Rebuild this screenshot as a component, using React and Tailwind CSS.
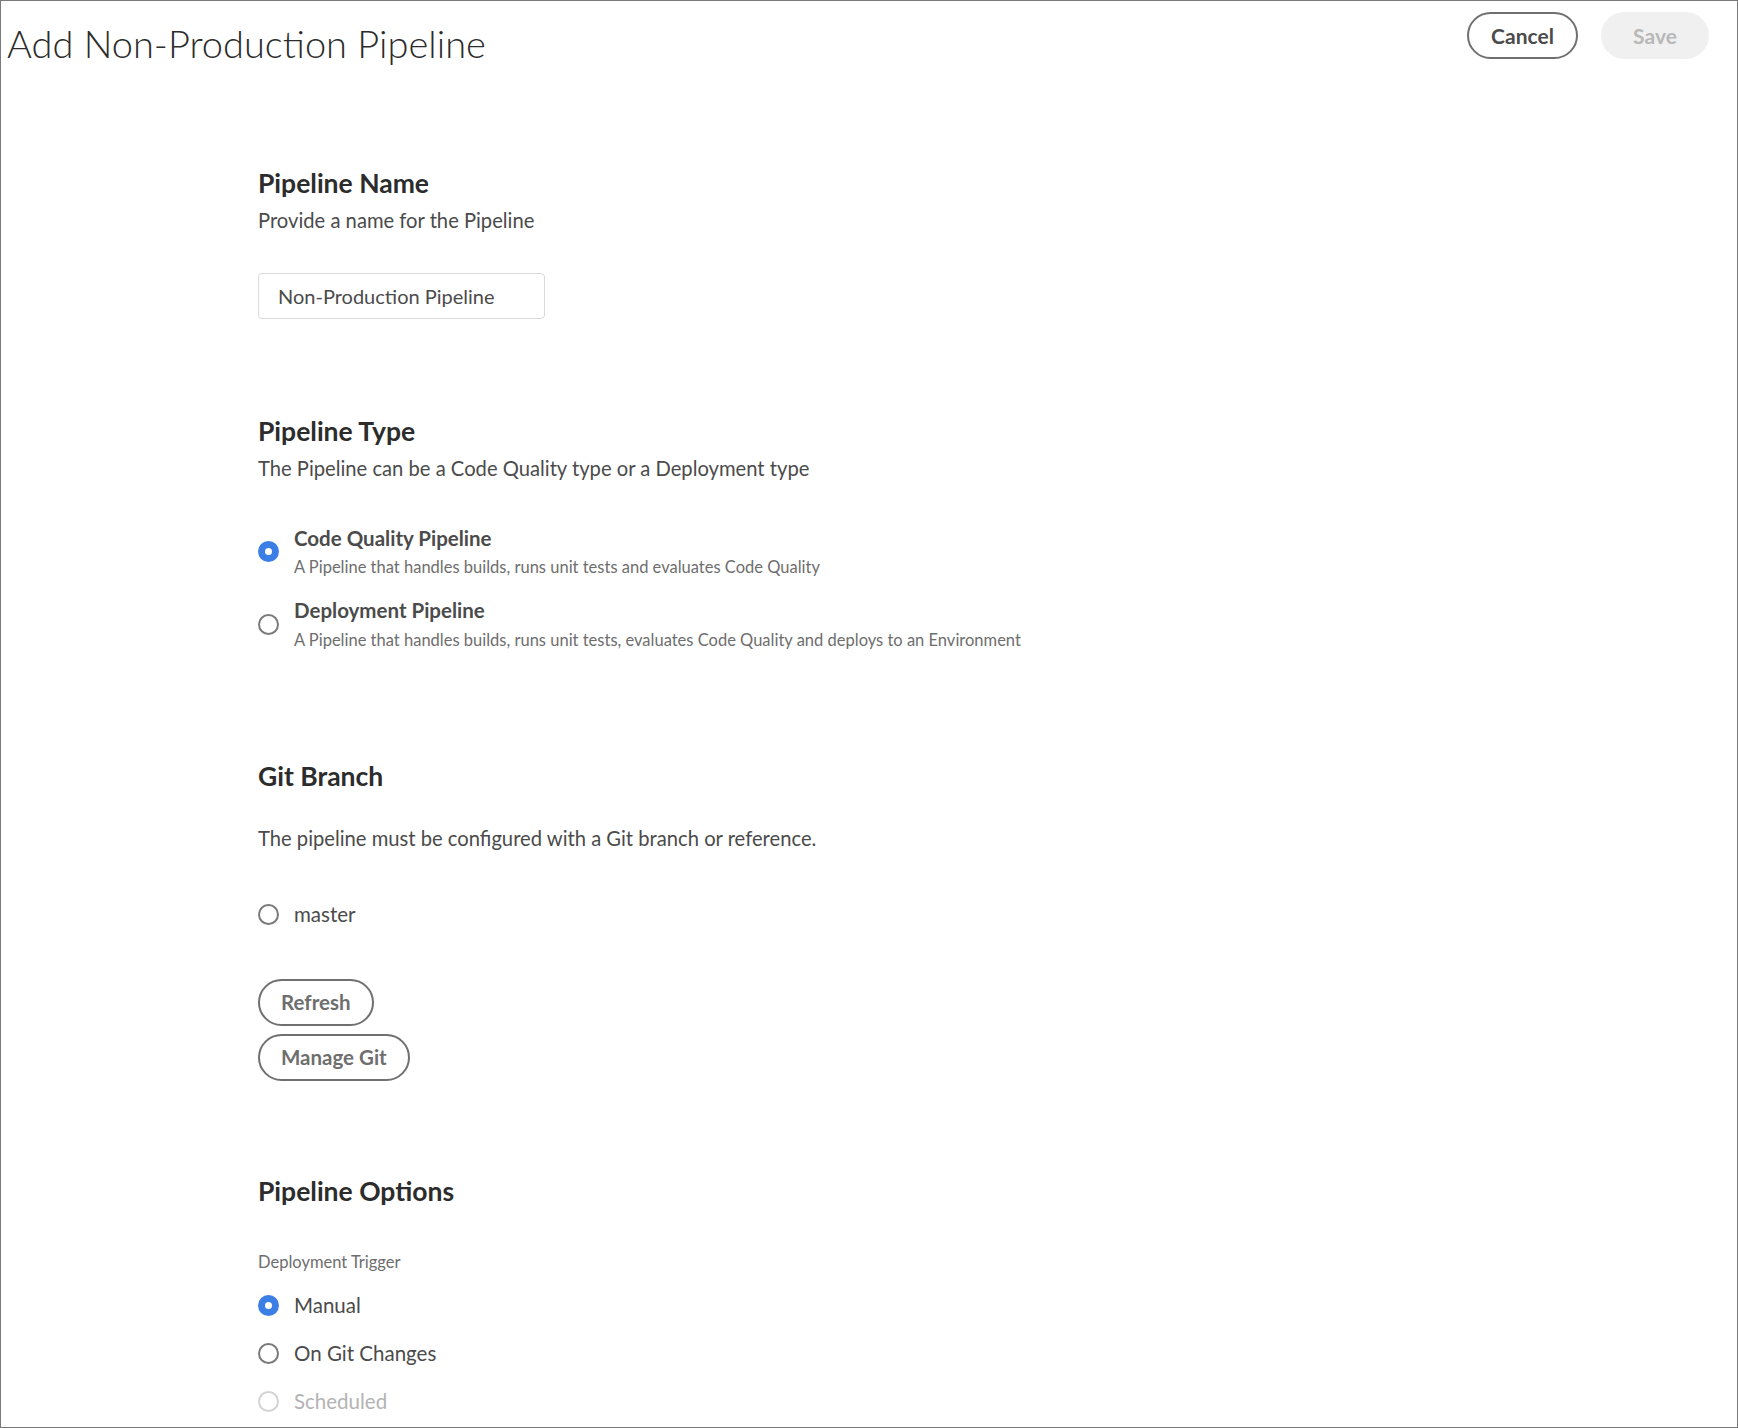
import React from 'react';

const font = { fontFamily: 'Lato, "Open Sans", "Liberation Sans", sans-serif' };

const Radio = ({ checked, disabled }) => {
  if (checked) {
    return (
      <span className="w-[21px] h-[21px] shrink-0 rounded-full bg-[#3b7fe6] flex items-center justify-center">
        <span className="w-[7px] h-[7px] rounded-full bg-white" />
      </span>
    );
  }
  return (
    <span
      className={`w-[21px] h-[21px] shrink-0 rounded-full border-2 bg-white ${
        disabled ? 'border-[#d3d3d3]' : 'border-[#7a7a7a]'
      }`}
    />
  );
};

const Heading = ({ children, className = '' }) => (
  <h2 className={`text-[26.5px] leading-[30px] font-bold text-[#2c2c2c] ${className}`}>{children}</h2>
);

const PillButton = ({ children }) => (
  <button className="h-[47px] px-[21px] rounded-full border-2 border-[#707070] text-[20.5px] font-bold text-[#6e6e6e] bg-white">
    {children}
  </button>
);

export default function App() {
  const triggers = [
    { label: 'Manual', checked: true },
    { label: 'On Git Changes' },
    { label: 'Scheduled', disabled: true },
  ];

  return (
    <div style={font} className="w-[1738px] h-[1428px] border border-[#7a7a7a] bg-white overflow-hidden">
      {/* Header */}
      <div className="flex items-start justify-between">
        <h1 className="pl-[6px] pt-[20px] text-[38px] leading-[44px] font-light text-[#2c2c2c]">
          Add Non-Production Pipeline
        </h1>
        <div className="flex items-center gap-[23px] pt-[11px] pr-[28px]">
          <button className="h-[47px] w-[111px] rounded-full border-2 border-[#707070] text-[21px] font-bold text-[#4b4b4b]">
            Cancel
          </button>
          <button className="h-[47px] w-[108px] rounded-full bg-[#f0f0f0] text-[21px] font-bold text-[#b8b8b8]">
            Save
          </button>
        </div>
      </div>

      <div className="pl-[257px]">
        {/* Pipeline Name */}
        <Heading className="mt-[103px]">Pipeline Name</Heading>
        <p className="mt-[10px] text-[20.2px] leading-6 text-[#4b4b4b]">Provide a name for the Pipeline</p>
        <div className="mt-[41px] w-[287px] h-[46px] rounded border border-[#dadada] flex items-center pl-[19px] text-[20px] text-[#4b4b4b]">
          Non-Production Pipeline
        </div>

        {/* Pipeline Type */}
        <Heading className="mt-[97px]">Pipeline Type</Heading>
        <p className="mt-[10px] text-[20.2px] leading-6 text-[#4b4b4b]">
          The Pipeline can be a Code Quality type or a Deployment type
        </p>
        <div className="mt-[46px] flex items-center gap-[15px]">
          <Radio checked />
          <div>
            <div className="text-[20.5px] leading-6 font-bold text-[#4b4b4b]">Code Quality Pipeline</div>
            <div className="mt-[7px] text-[16.5px] leading-5 text-[#6e6e6e]">
              A Pipeline that handles builds, runs unit tests and evaluates Code Quality
            </div>
          </div>
        </div>
        <div className="mt-[21px] flex items-center gap-[15px]">
          <Radio />
          <div>
            <div className="text-[20.5px] leading-6 font-bold text-[#4b4b4b]">Deployment Pipeline</div>
            <div className="mt-[8px] text-[16.5px] leading-5 text-[#6e6e6e]">
              A Pipeline that handles builds, runs unit tests, evaluates Code Quality and deploys to an Environment
            </div>
          </div>
        </div>

        {/* Git Branch */}
        <Heading className="mt-[111px]">Git Branch</Heading>
        <p className="mt-[35px] text-[20.2px] leading-6 text-[#4b4b4b]">
          The pipeline must be configured with a Git branch or reference.
        </p>
        <div className="mt-[52px] flex items-center gap-[15px]">
          <Radio />
          <span className="text-[20.5px] leading-6 text-[#4b4b4b]">master</span>
        </div>
        <div className="mt-[53px] flex flex-col items-start gap-2">
          <PillButton>Refresh</PillButton>
          <PillButton>Manage Git</PillButton>
        </div>

        {/* Pipeline Options */}
        <Heading className="mt-[95px]">Pipeline Options</Heading>
        <p className="mt-[46px] text-[16.5px] leading-5 text-[#6e6e6e]">Deployment Trigger</p>
        <div className="mt-[21px] flex flex-col gap-6">
          {triggers.map((t) => (
            <div key={t.label} className="flex items-center gap-[15px] h-6">
              <Radio checked={t.checked} disabled={t.disabled} />
              <span className={`text-[20.5px] leading-6 ${t.disabled ? 'text-[#b3b3b3]' : 'text-[#4b4b4b]'}`}>
                {t.label}
              </span>
            </div>
          ))}
        </div>
      </div>
    </div>
  );
}
